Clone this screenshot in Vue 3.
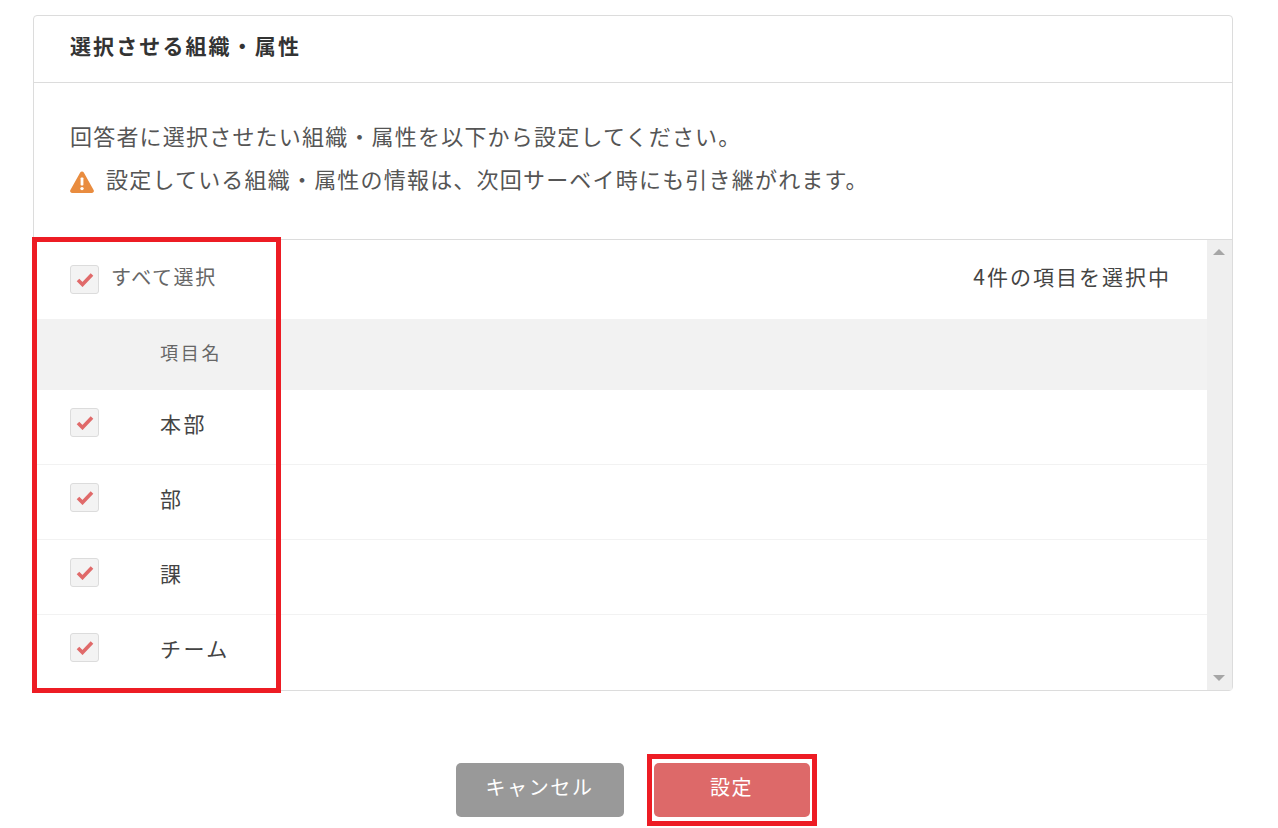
<template>
  <main class="page">
    <section class="card">
      <h2 class="card-title">選択させる組織・属性</h2>
      <div class="intro">
        <p>回答者に選択させたい組織・属性を以下から設定してください。</p>
        <p class="warning">
          <svg class="warning-icon" viewBox="0 0 24 22" width="24" height="22">
            <path d="M12 0.5c.8 0 1.4.4 1.8 1.1l9.8 17.4c.8 1.4-.1 2.9-1.7 2.9H2.1c-1.6 0-2.5-1.5-1.7-2.9L10.200 1.600C10.600.9 11.200.5 12 .5z" fill="#e98c3f" />
            <rect x="10.600" y="6.500" width="2.800" height="8" rx="0.800" fill="#fff" />
            <circle cx="12" cy="17.600" r="1.700" fill="#fff" />
          </svg>
          設定している組織・属性の情報は、次回サーベイ時にも引き継がれます。
        </p>
      </div>
      <div class="list-wrap">
        <div class="list">
          <div class="select-all">
            <label class="check-label">
              <span class="check">
                <svg viewBox="0 0 18 15" width="18" height="15"><path d="M2 8l4.500 4.500 9.500-10" fill="none" stroke="#e06a6a" stroke-width="3.600" /></svg>
              </span>
              <span class="all-text">すべて選択</span>
            </label>
            <span class="count">{{ items.length }}件の項目を選択中</span>
          </div>
          <div class="head-row">項目名</div>
          <div v-for="item in items" :key="item" class="row">
            <span class="check">
              <svg viewBox="0 0 18 15" width="18" height="15"><path d="M2 8l4.500 4.500 9.500-10" fill="none" stroke="#e06a6a" stroke-width="3.600" /></svg>
            </span>
            <span class="row-name">{{ item }}</span>
          </div>
        </div>
        <div class="scrollbar">
          <span class="arrow up"></span>
          <span class="arrow down"></span>
        </div>
        <div class="highlight highlight-list"></div>
      </div>
    </section>
    <div class="actions">
      <button class="btn cancel">キャンセル</button>
      <span class="save-wrap">
        <button class="btn save">設定</button>
      </span>
    </div>
  </main>
</template>

<script setup>
const items = ["本部", "部", "課", "チーム"];
</script>

<style>
html,
body {
  background: #fff;
}
</style>

<style scoped>
.page {
  width: 1278px;
  height: 828px;
  overflow: hidden;
  padding: 15px 45px 0 33px;
  box-sizing: border-box;
  font-family: "Noto Sans CJK JP", "Noto Sans", sans-serif;
  color: #444;
}
.card {
  border: 1px solid #dcdcdc;
  border-radius: 4px;
  height: 676px;
  box-sizing: border-box;
  display: flex;
  flex-direction: column;
}
.card-title {
  margin: 0;
  height: 67px;
  box-sizing: border-box;
  border-bottom: 1px solid #dcdcdc;
  padding: 0 36px;
  font-size: 21px;
  font-weight: 700;
  letter-spacing: 2.100px;
  line-height: 58px;
  color: #333;
}
.intro {
  height: 157px;
  box-sizing: border-box;
  padding: 38px 36px 0;
  border-bottom: 1px solid #dcdcdc;
  font-size: 22px;
  letter-spacing: 1.200px;
  color: #555;
}
.intro p {
  margin: 0 0 14px;
  line-height: 29px;
  display: flex;
  align-items: center;
  gap: 12px;
}
.warning-icon {
  flex: none;
  margin-top: 6px;
}
.list-wrap {
  flex: 1;
  display: flex;
  position: relative;
  min-height: 0;
}
.list {
  flex: 1;
}
.select-all {
  height: 79px;
  box-sizing: border-box;
  padding: 0 36px;
  display: flex;
  align-items: center;
  justify-content: space-between;
  font-size: 20px;
  letter-spacing: 1px;
  color: #666;
}
.check-label {
  display: flex;
  align-items: center;
  gap: 12px;
}
.all-text {
  letter-spacing: 1.600px;
  margin-top: -6px;
}
.count {
  font-size: 21px;
  color: #444;
  letter-spacing: 2px;
  margin-top: -8px;
}
.head-row {
  height: 71px;
  background: #f2f2f2;
  padding-left: 126px;
  font-size: 18px;
  letter-spacing: 2.800px;
  line-height: 66px;
  color: #666;
}
.row {
  height: 75px;
  box-sizing: border-box;
  border-bottom: 1px solid #f2f2f2;
  padding: 0 0 6px 36px;
  display: flex;
  align-items: center;
  font-size: 21px;
  color: #444;
}
.row:last-child {
  border-bottom: none;
}
.row-name {
  margin-left: 61px;
  margin-top: -3px;
  letter-spacing: 2.500px;
}
.check {
  flex: none;
  width: 29px;
  height: 29px;
  box-sizing: border-box;
  border: 1px solid #dcdcdc;
  border-radius: 3px;
  background: #f3f3f3;
  display: flex;
  align-items: center;
  justify-content: center;
}
.row .check {
  margin-top: -4px;
}
.scrollbar {
  width: 25px;
  flex: none;
  background: #efefef;
  position: relative;
}
.arrow {
  position: absolute;
  left: 6px;
  border-left: 6px solid transparent;
  border-right: 6px solid transparent;
}
.arrow.up {
  top: 9px;
  border-bottom: 6px solid #a6a6a6;
}
.arrow.down {
  bottom: 9px;
  border-top: 6px solid #a6a6a6;
}
.highlight-list {
  position: absolute;
  left: -2px;
  top: -3px;
  width: 249px;
  height: 456px;
  box-sizing: border-box;
  border: 5px solid #ed1c24;
  pointer-events: none;
}
.actions {
  display: flex;
  justify-content: center;
  align-items: center;
  gap: 24px;
  height: 72px;
  margin-top: 63px;
  padding-left: 6px;
}
.btn {
  border: none;
  border-radius: 5px;
  height: 54px;
  padding: 0 0 8px;
  color: #fff;
  font-family: inherit;
  font-size: 20px;
  letter-spacing: 1.600px;
}
.cancel {
  width: 168px;
  background: #999;
}
.save {
  width: 156px;
  background: #dd6969;
  display: block;
}
.save-wrap {
  display: block;
  border: 5px solid #ed1c24;
  padding: 4px 2px;
  margin-left: -1px;
  margin-right: 0;
}
</style>
